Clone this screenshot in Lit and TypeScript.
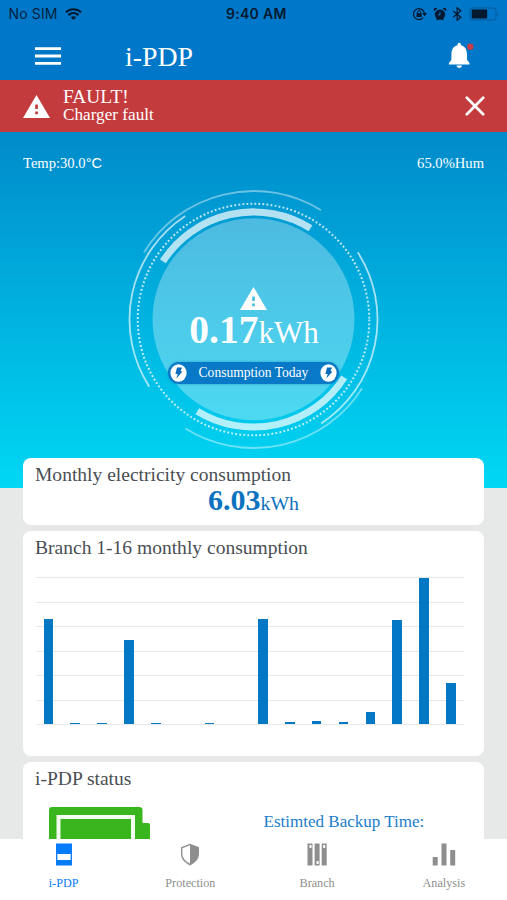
import { LitElement, html, css, svg } from "lit";
import { customElement } from "lit/decorators.js";

const CX = 127.5;
const CY = 131.5;

/** Arc path around the dial centre; angles in degrees, clockwise from 12 o'clock. */
function arc(r: number, from: number, to: number): string {
  const pt = (a: number) => {
    const t = (a * Math.PI) / 180;
    return `${(CX + r * Math.sin(t)).toFixed(2)} ${(CY - r * Math.cos(t)).toFixed(2)}`;
  };
  return `M${pt(from)}A${r} ${r} 0 ${to - from > 180 ? 1 : 0} 1 ${pt(to)}`;
}

@customElement("warning-icon")
class WarningIcon extends LitElement {
  static styles = css`
    :host { display: block; }
    svg { display: block; width: 100%; height: 100%; }
  `;
  render() {
    return html`<svg viewBox="0 0 27 23" preserveAspectRatio="none">
      <path d="M13.5 0L27 23H0z" fill="#fff" />
      <path d="M12.2 9.5h2.7v4.500h-2.700zM12.200 16.400h2.700v2.800h-2.700z" fill="var(--mark)" />
    </svg>`;
  }
}

@customElement("consumption-dial")
class ConsumptionDial extends LitElement {
  static styles = css`
    :host { display: grid; width: 256px; height: 263px; font-family: "Liberation Serif", "Times New Roman", serif; color: #fff; }
    .ring, .body { grid-area: 1 / 1; }
    .ring { width: 256px; height: 263px; overflow: visible; }
    .body { display: flex; flex-direction: column; align-items: center; padding: 98.5px 1px 0 0; z-index: 1; }
    .warn { width: 27px; height: 23px; --mark: #48c0e4; }
    .value { display: flex; align-items: baseline; height: 52px; box-sizing: border-box; padding-top: 1px; line-height: 38px; white-space: nowrap; margin-right: -1px; }
    .value b { font-size: 39.5px; }
    .value span { font-size: 31px; }
    .pill { box-sizing: border-box; width: 171px; height: 22px; border-radius: 11px; background: #0879c6; box-shadow: 0 0 3px rgba(0, 80, 150, 0.4); display: flex; align-items: center; justify-content: space-between; padding: 0 2px; font-size: 13.55px; }
    .pill svg { width: 17px; height: 18px; }
  `;
  private bolt() {
    return html`<svg viewBox="0 0 17 18">
      <ellipse cx="8.5" cy="9" rx="8.1" ry="8.8" fill="#fff" />
      <path d="M7 3.500h5L10.600 7.100l1.700.6-6 6.900 1.400-4.500H5.400z" fill="#0a6cba" />
    </svg>`;
  }
  render() {
    const thin = [
      [124, 237.2, 326.6, 0.65],
      [124, 57.2, 146.9, 0.65],
      [128.5, -58.5, 31.7, 0.42],
      [128.5, 122.3, 212, 0.42],
    ];
    return html`
      <svg class="ring" viewBox="0 0 256 263">
        <circle cx="127.5" cy="131.3" r="101" fill="#fff" fill-opacity=".3" />
        <circle cx="127.5" cy="131.5" r="115.8" fill="none" stroke="#fff" stroke-opacity=".75" stroke-width="2" stroke-dasharray="1.9 2.145" />
        <path d=${arc(107.6, -57.3, 32)} fill="none" stroke="#fff" stroke-opacity=".7" stroke-width="7" />
        <path d=${arc(107.6, 122.5, 211.5)} fill="none" stroke="#fff" stroke-opacity=".7" stroke-width="7" />
        ${thin.map(([r, a, b, o]) => svg`<path d=${arc(r, a, b)} fill="none" stroke="#fff" stroke-opacity=${o} stroke-width="1.8" />`)}
      </svg>
      <div class="body">
        <warning-icon class="warn"></warning-icon>
        <div class="value"><b>0.17</b><span>kWh</span></div>
        <div class="pill">${this.bolt()}<span>Consumption Today</span>${this.bolt()}</div>
      </div>
    `;
  }
}

@customElement("branch-chart")
class BranchChart extends LitElement {
  static styles = css`
    :host { display: grid; height: 148px; margin: 0 20px 0 13px; }
    .lines, .bars { grid-area: 1 / 1; }
    .lines { display: flex; flex-direction: column; justify-content: space-between; }
    .lines i { height: 1px; background: #e6e8e9; }
    .bars { display: flex; align-items: flex-end; margin: 0 -0.2px 1px -1px; z-index: 1; }
    .slot { flex: 1; display: flex; justify-content: center; }
    .bar { width: 9.6px; background: #0478c4; }
  `;
  private values = [104.8, 0.7, 1.2, 83.6, 1.2, 0, 0.8, 0, 105.3, 2.3, 3.4, 2.3, 12.2, 103.8, 146.5, 40.6];
  render() {
    return html`
      <div class="lines">${Array.from({ length: 7 }, () => html`<i></i>`)}</div>
      <div class="bars">
        ${this.values.map((v) => html`<div class="slot"><div class="bar" style="height:${v}px"></div></div>`)}
      </div>
    `;
  }
}

@customElement("app-root")
class AppRoot extends LitElement {
  static styles = css`
    :host { display: flex; flex-direction: column; height: 900px; overflow: hidden; background: #e7e9e9; font-family: "Liberation Serif", "Times New Roman", serif; }
    svg { display: block; }
    .top { background: #0077c8; height: 80px; flex: none; }
    .status { display: grid; grid-template-columns: 1fr auto 1fr; align-items: center; height: 27px; padding: 0 7px 0 8.5px; font: 500 14px Inter, "Liberation Sans", sans-serif; color: #04213c; }
    .left { display: flex; align-items: center; gap: 7px; font-weight: 400; letter-spacing: 0.15px; }
    .time { font-weight: 600; font-size: 14px; letter-spacing: 0.3px; margin-left: 4px; color: #03192f; }
    .right { display: flex; justify-content: flex-end; align-items: center; }
    .nav { display: flex; align-items: center; height: 53px; padding: 5px 31px 0 35px; box-sizing: border-box; color: #fff; }
    .menu { width: 26px; height: 18px; margin-top: -1px; }
    .title { flex: 1; margin-left: 64px; font-size: 27.8px; line-height: 34px; margin-top: 1px; }
    .bell { width: 30px; height: 28px; margin: -1px 0 0; }
    .alert { flex: none; display: flex; align-items: center; height: 52px; padding: 0 22px 0 23px; background: #c43b3d; color: #fff; }
    .alert .tri { width: 27px; height: 23px; --mark: #c43b3d; margin-top: 1px; }
    .msg { flex: 1; margin-left: 13px; line-height: 18px; font-size: 17.2px; }
    .msg .head { font-size: 19.4px; line-height: 18.5px; }
    .close { width: 20px; height: 20px; margin-top: -1px; }
    .hero { flex: none; height: 356px; box-sizing: border-box; background: linear-gradient(#008aca, #00d8f4); color: #fff; }
    .env { display: flex; justify-content: space-between; box-sizing: border-box; padding: 22px 23px 0; height: 56px; line-height: 18px; font-size: 14.6px; }
    .cel { font-family: "Liberation Sans", sans-serif; }
    .dial { margin-left: 126px; }
    .main { flex: 1; min-height: 0; overflow: hidden; display: flex; flex-direction: column; gap: 6px; padding: 0 23px; margin-top: -30px; }
    .card { flex: none; background: #fff; border-radius: 8px; color: #4a4e53; }
    h2 { margin: 0; padding-left: 12px; font-weight: 400; font-size: 19.55px; line-height: 24px; }
    .monthly { height: 67px; padding-top: 5px; box-sizing: border-box; }
    .total { text-align: center; color: #0c72c0; line-height: 28px; font-size: 19.8px; margin-top: -1px; }
    .total b { font-size: 30px; }
    .branches { height: 225px; padding-top: 5px; box-sizing: border-box; }
    .chart { margin-top: 17px; }
    .state { height: 140px; padding-top: 5px; box-sizing: border-box; }
    .power { display: flex; align-items: flex-start; }
    .battery { width: 101px; height: 60px; margin: 15.5px 0 0 26px; }
    .backup { margin: 20.5px 0 0 113.5px; font-size: 17.05px; line-height: 20px; color: #1a7dcb; }
    .tabs { flex: none; height: 61px; background: #fff; display: grid; grid-template-columns: repeat(4, 1fr); font-size: 12.2px; color: #8e8e8e; z-index: 1; }
    .tab { display: flex; flex-direction: column; align-items: center; padding: 4px 0 0 0.5px; }
    .tab svg { width: 26px; height: 24px; margin-bottom: 8px; }
    .tab span { line-height: 16px; }
    .active { color: #087bf8; }
  `;

  private tabs = [
    { name: "i-PDP", icon: svg`<path d="M5 .5h16v22H5zM6.3 11v6h13.4v-6z" fill-rule="evenodd" />` },
    { name: "Protection", icon: svg`<path d="M13 .8L4 4.3v6.5c0 5.3 4 9.4 9 11.6 5-2.2 9-6.300 9-11.600V4.300zM13 2.300v18.300c-4.300-2-7.600-5.500-7.600-9.800V5.200z" fill-rule="evenodd" />` },
    { name: "Branch", icon: svg`<path d="M3.500.5h5v22h-5zM10.600.5h5v22h-5zM17.700.5h5v22h-5zM5.500 2v3h2V2zM12.600 18v3h2v-3zM19.200 2v3h2V2z" fill-rule="evenodd" />` },
    { name: "Analysis", icon: svg`<path d="M1.700 14h5v8.500h-5zM10.500.5h5v22h-5zM19.200 7h5v15.500h-5z" />` },
  ];

  render() {
    return html`
      <header class="top">
        <div class="status">
          <div class="left">
            <span>No SIM</span>
            <svg width="17" height="12" viewBox="0 0 17 12" fill="none" stroke="#03192f" stroke-width="2.1">
              <path d="M.8 4.300C5.200.200 11.800.200 16.200 4.300M3.500 7.100c2.900-2.600 7.100-2.600 10 0" />
              <path d="M8.500 12L5.700 9.200c1.600-1.400 4-1.400 5.600 0z" fill="#03192f" stroke="none" />
            </svg>
          </div>
          <span class="time">9:40 AM</span>
          <div class="right">
            <svg width="88" height="14" viewBox="0 0 88 14" fill="#03192f">
              <path d="M11.200 10.600A5.500 5.500 0 1 1 12.400 6.500" fill="none" stroke="#03192f" stroke-width="1.300" />
              <path d="M10.100 6h5l-2.500 3.300zM4.500 6.300h5.200v3.800H4.500z" />
              <path d="M5.600 6.500V5.200a1.500 1.500 0 0 1 3 0v1.300" fill="none" stroke="#03192f" />
              <circle cx="28" cy="7.600" r="5.200" />
              <path d="M22.300 4.300a2 2 0 0 1 3-2.900zM33.700 4.300a2 2 0 0 0-3-2.900zM24.300 13l1.500-2 1 1-1.500 1.500zM31.700 13l-1.500-2-1 1 1.500 1.500z" />
              <path d="M28 4.800v3h-2.200" fill="none" stroke="#0077c8" />
              <path d="M41.300 4l7.500 6.200-3.600 3V.800l3.600 3-7.500 6.400" fill="none" stroke="#03192f" stroke-width="1.300" />
              <rect x="58" y="1" width="26" height="12" rx="2.500" fill="none" stroke="#075b99" />
              <rect x="59.700" y="2.500" width="15.500" height="9" rx="1" />
              <path d="M85.500 5q2.200 2 0 4z" fill="#075b99" />
            </svg>
          </div>
        </div>
        <div class="nav">
          <svg class="menu" viewBox="0 0 26 18" stroke="#fff" stroke-width="2.800"><path d="M0 1.700h26M0 9h26M0 16.300h26" /></svg>
          <div class="title">i-PDP</div>
          <svg class="bell" viewBox="0 0 30 28">
            <path d="M11.500 3.200C11.600 1.600 12.300.800 13.200.800s1.700.8 1.800 2.400c4 1.100 5.800 4.200 5.900 8.300l.2 6.500 2.400 3v1.500H2.900V21l2.400-3 .2-6.500c.1-4.100 1.900-7.200 5.900-8.300zM10.500 23.500h5.500c-.3 3.200-5.200 3.200-5.500 0z" fill="#fff" />
            <circle cx="24.300" cy="4.700" r="3.200" fill="#c43d48" />
          </svg>
        </div>
      </header>
      <div class="alert">
        <warning-icon class="tri"></warning-icon>
        <div class="msg"><div class="head">FAULT!</div><div>Charger fault</div></div>
        <svg class="close" viewBox="0 0 20 20" stroke="#fff" stroke-width="2.700" stroke-linecap="round"><path d="M1.800 1.800l16.400 16.400M18.200 1.800L1.800 18.200" /></svg>
      </div>
      <section class="hero">
        <div class="env"><span>Temp:30.0<span class="cel">°C</span></span><span>65.0%Hum</span></div>
        <consumption-dial class="dial"></consumption-dial>
      </section>
      <main class="main">
        <section class="card monthly">
          <h2>Monthly electricity consumption</h2>
          <div class="total"><b>6.03</b>kWh</div>
        </section>
        <section class="card branches">
          <h2>Branch 1-16 monthly consumption</h2>
          <branch-chart class="chart"></branch-chart>
        </section>
        <section class="card state">
          <h2>i-PDP status</h2>
          <div class="power">
            <svg class="battery" viewBox="0 0 101 60">
              <path d="M0 60V3q0-3 3-3h87q3.500 0 3.500 3v13H99q2 0 2 2v42z" fill="#39b51d" />
              <path d="M9.500 60V10h74.500V60" fill="none" stroke="#f2fcef" stroke-width="4" />
            </svg>
            <div class="backup">Estimted Backup Time:</div>
          </div>
        </section>
      </main>
      <nav class="tabs">
        ${this.tabs.map((t, i) => html`<div class="tab ${i === 0 ? "active" : ""}"><svg viewBox="0 0 26 24" fill="currentColor">${t.icon}</svg><span>${t.name}</span></div>`)}
      </nav>
    `;
  }
}
